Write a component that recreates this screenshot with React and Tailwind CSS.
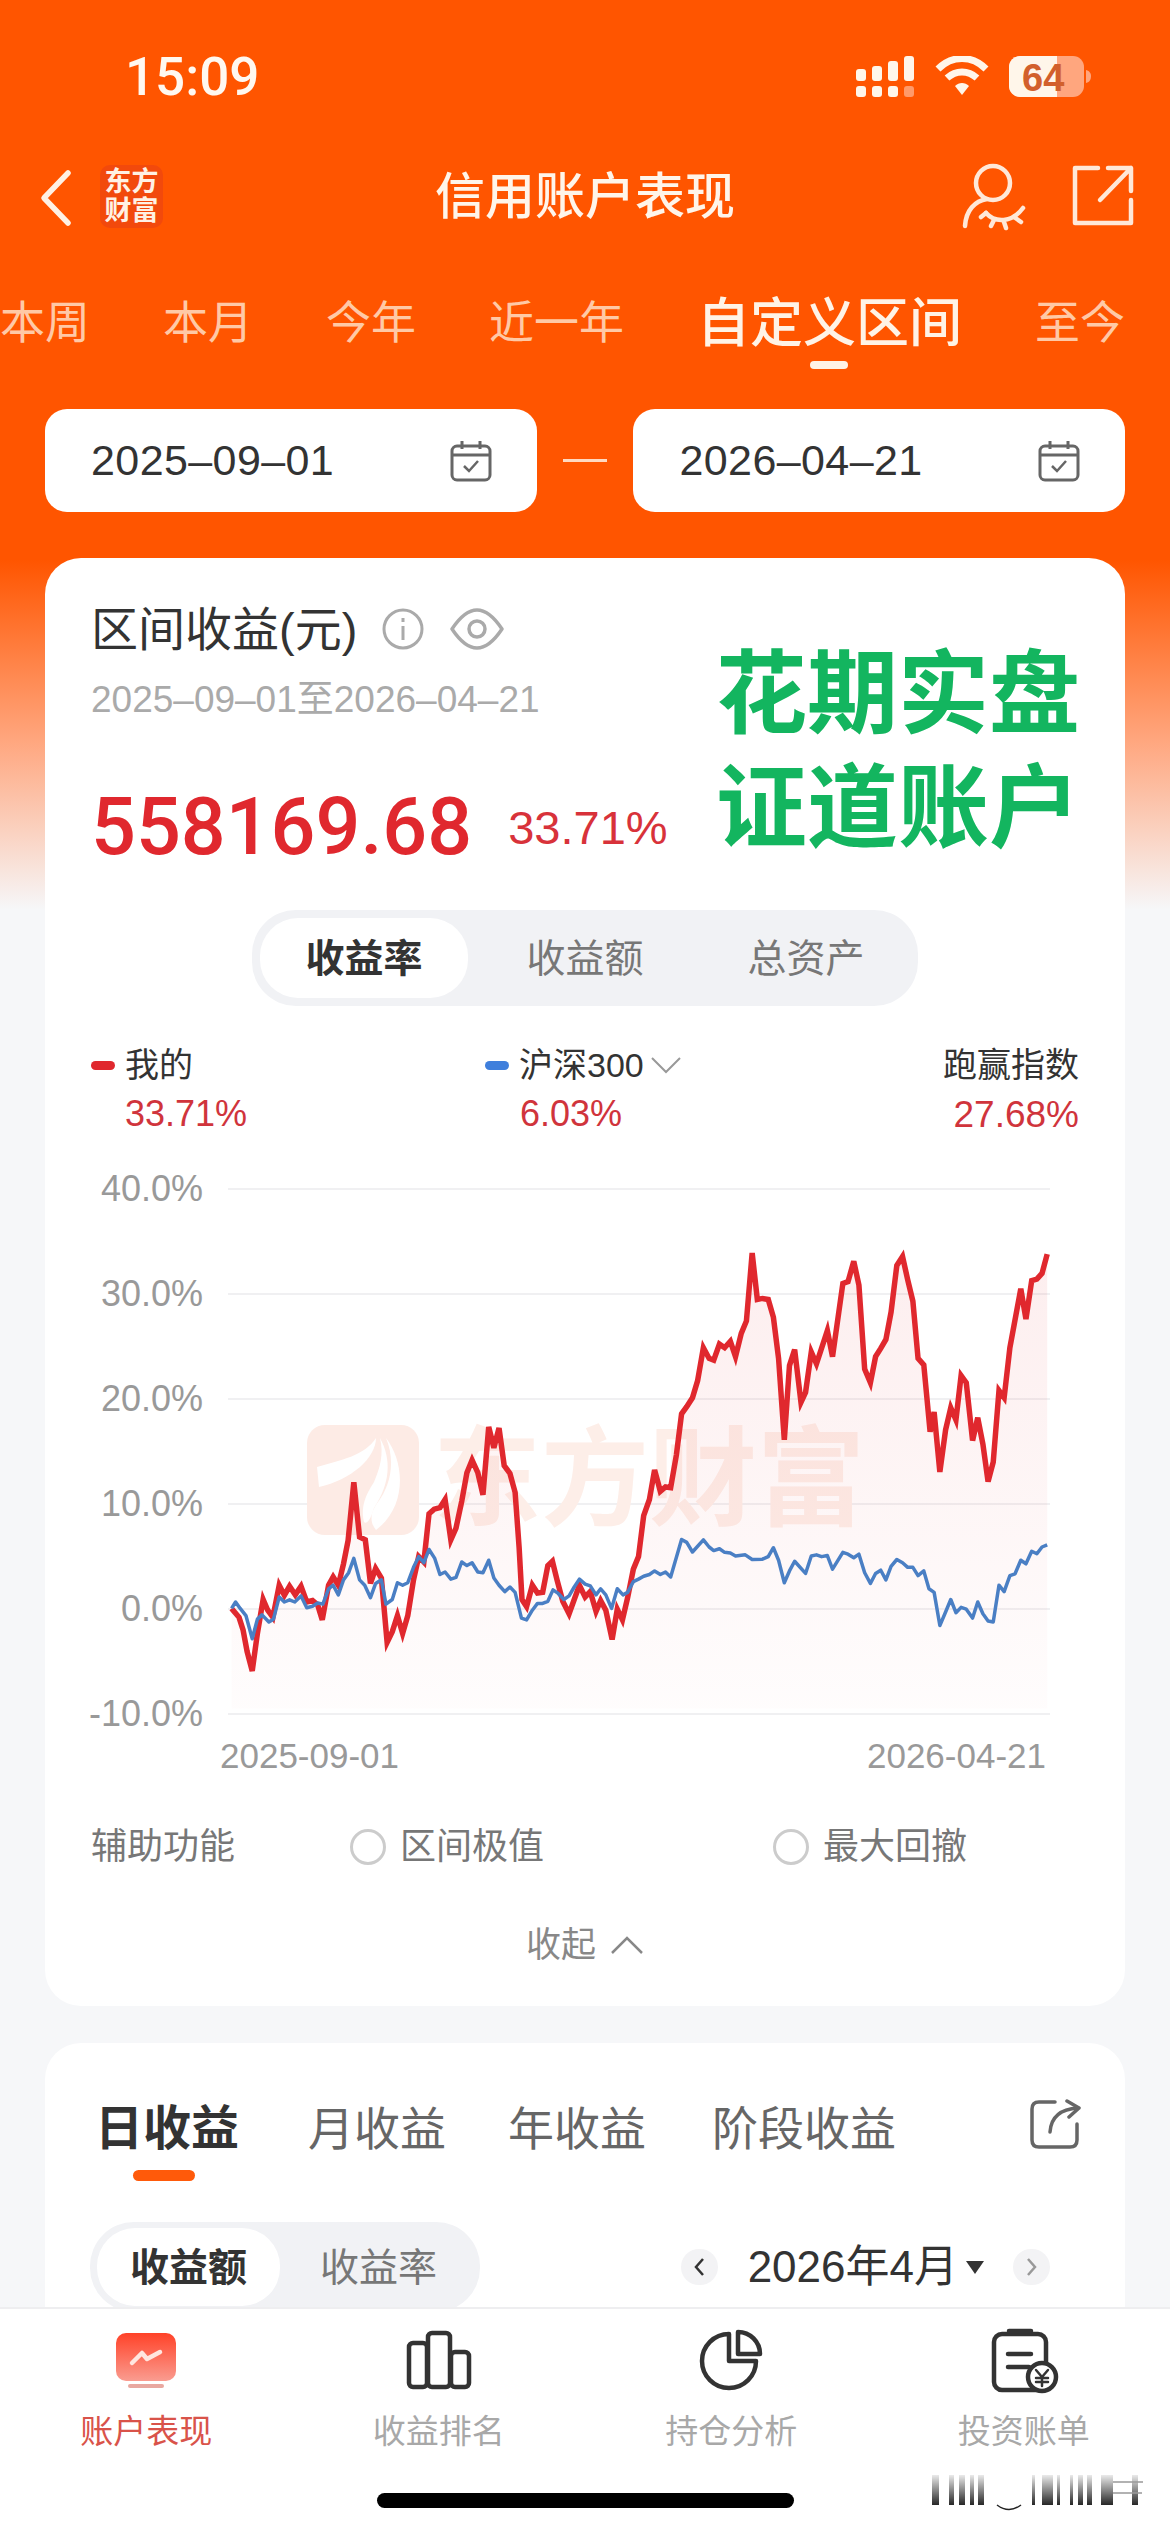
const redLine = '55,1250 68,1275 75,1310 82,1370 91,1425 100,1320 110,1225 118,1255 127,1275 138,1185 147,1213 156,1188 166,1212 176,1188 186,1232 196,1228 205,1240 213,1282 224,1185 232,1162 241,1185 250,1125 258,1060 268,897 278,1050 288,1058 297,1180 306,1138 316,1165 326,1345 335,1315 344,1270 353,1320 362,1270 372,1170 381,1105 390,1120 399,985 408,972 418,968 427,945 437,1058 446,1025 456,950 465,870 474,835 484,870 493,932 503,742 512,800 521,745 530,850 540,872 549,925 556,1080 561,1225 569,1245 579,1185 588,1207 597,1205 606,1130 614,1118 622,1170 632,1230 643,1265 652,1225 661,1185 671,1218 680,1203 690,1258 698,1228 707,1255 718,1337 727,1252 736,1282 745,1220 755,1140 764,1105 773,990 783,945 792,862 802,922 811,910 820,912 830,820 839,705 848,685 858,660 867,612 877,520 887,550 895,555 905,510 914,520 924,502 933,545 943,480 952,445 962,255 971,385 980,382 990,385 999,435 1008,550 1018,778 1027,570 1036,525 1047,673 1055,645 1065,532 1074,565 1093,472 1102,545 1120,340 1129,335 1139,278 1148,345 1158,580 1168,618 1177,545 1186,522 1195,497 1204,420 1214,290 1224,265 1233,330 1242,390 1251,550 1261,568 1272,755 1279,700 1289,868 1299,750 1308,688 1317,722 1326,598 1335,618 1346,780 1355,716 1364,790 1373,895 1382,840 1392,640 1401,660 1411,520 1430,355 1439,440 1449,332 1458,328 1467,312 1476,258';
const blueLine = '55,1250 62,1232 70,1250 80,1270 91,1335 100,1280 108,1268 120,1288 128,1280 138,1218 147,1232 156,1226 165,1232 176,1215 186,1248 196,1244 205,1235 214,1238 224,1195 232,1185 241,1212 250,1170 259,1150 268,1110 278,1170 287,1185 297,1220 306,1180 316,1170 324,1238 335,1225 344,1178 353,1185 362,1178 372,1135 381,1105 390,1122 399,1085 409,1110 418,1155 427,1148 437,1168 446,1163 456,1120 465,1130 474,1122 484,1148 493,1150 503,1115 512,1165 521,1185 531,1203 540,1190 549,1205 560,1277 569,1282 579,1255 588,1236 597,1236 606,1230 615,1198 624,1208 634,1225 643,1215 652,1190 661,1168 671,1182 680,1187 690,1212 698,1195 707,1212 717,1250 727,1195 737,1212 745,1205 755,1175 764,1168 773,1160 783,1155 792,1145 802,1155 811,1148 820,1162 839,1057 848,1065 858,1092 877,1058 887,1078 895,1088 905,1083 914,1093 924,1095 933,1103 950,1100 962,1113 980,1112 990,1105 999,1080 1008,1115 1018,1178 1027,1145 1036,1118 1055,1152 1065,1103 1074,1100 1083,1105 1093,1102 1102,1140 1120,1093 1129,1098 1139,1108 1148,1098 1158,1150 1168,1180 1177,1152 1186,1143 1195,1170 1204,1132 1214,1113 1224,1122 1233,1135 1242,1135 1251,1158 1261,1145 1270,1195 1279,1205 1289,1298 1299,1260 1308,1225 1317,1262 1326,1247 1335,1252 1346,1277 1355,1232 1364,1265 1373,1285 1382,1288 1392,1185 1401,1203 1411,1158 1420,1153 1430,1115 1439,1125 1449,1090 1458,1097 1467,1078 1476,1072';

const yLabels = ['40.0%', '30.0%', '20.0%', '10.0%', '0.0%', '-10.0%'];
const periods = ['本周', '本月', '今年', '近一年', '自定义区间', '至今'];

function Calendar() {
    return (
        <svg width="42" height="42" viewBox="0 0 42 42" fill="none" stroke="#666" strokeWidth="3">
            <rect x="2" y="6" width="38" height="34" rx="5" />
            <path d="M2 15H40" />
            <path d="M12 1V9M30 1V9" />
            <path d="M14 26L19 31L28 21" strokeWidth="2.5" />
        </svg>
    );
}

function DateBox({ value }) {
    return (
        <div className="flex h-[103px] w-[492px] items-center justify-between rounded-[22px] bg-white pl-[46px] pr-[45px]">
            <span className="text-[43px] leading-none tracking-[0.4px] text-[#333]">{value}</span>
            <Calendar />
        </div>
    );
}

function StatusBar() {
    return (
        <div className="flex h-[155px] items-start justify-between pl-[125px] pr-[79px] pt-[51px]">
            <span className="font-['Roboto'] text-[53px] font-medium leading-[52px] text-[#fff8f0]">15:09</span>
            <svg className="mt-[5px]" width="235" height="44" viewBox="856 57 235 44" fill="#fff6ea">
                <rect x="856" y="70" width="10" height="12" rx="3" />
                <rect x="872" y="67" width="10" height="15" rx="3" />
                <rect x="888" y="62" width="10" height="20" rx="3" />
                <rect x="904" y="57" width="10" height="25" rx="3" />
                <rect x="856" y="87" width="10" height="11" rx="3" />
                <rect x="872" y="87" width="10" height="11" rx="3" />
                <rect x="888" y="87" width="10" height="11" rx="3" />
                <rect x="904" y="87" width="10" height="11" rx="3" fill="#ff9a6a" />
                <path d="M938 70C952 56 972 56 986 70" fill="none" stroke="#fff6ea" strokeWidth="7" />
                <path d="M947 79C956 71 968 71 977 79" fill="none" stroke="#fff6ea" strokeWidth="7" />
                <path d="M955 87C959 83 965 83 969 87L962 96Z" />
                <rect x="1009" y="57" width="75" height="41" rx="11" fill="#ffa67e" />
                <path d="M1020 57H1057V98H1020A11 11 0 0 1 1009 87V68A11 11 0 0 1 1020 57Z" />
                <path d="M1086 71C1090 72 1091 75 1091 77C1091 80 1090 83 1086 84Z" fill="#ffa67e" />
            </svg>
            <span className="absolute left-[1022px] top-[59px] font-['Liberation_Sans'] text-[38px] font-bold leading-[38px] text-[#d2602c]">64</span>
        </div>
    );
}

function NavBar() {
    return (
        <div className="relative flex h-[84px] items-center justify-center">
            <svg className="absolute left-[38px] top-[14px]" width="38" height="58" viewBox="0 0 38 58" fill="none" stroke="#fff1e4" strokeWidth="5.5" strokeLinecap="round" strokeLinejoin="round">
                <path d="M30 4L6 29L30 54" />
            </svg>
            <div className="absolute left-[100px] top-[10px] flex h-[63px] w-[63px] flex-col items-center justify-center rounded-[10px] bg-[#f2490c] font-bold text-[#fff1e4]">
                <span className="text-[27px] leading-[29px]">东方</span>
                <span className="text-[27px] leading-[29px]">财富</span>
            </div>
            <span className="text-[50px] font-medium leading-none text-[#fff5ea]">信用账户表现</span>
            <svg className="absolute left-[955px] top-[8px]" width="185" height="68" viewBox="955 165 185 68" fill="none" stroke="#ffe8d8" strokeWidth="4.5" strokeLinecap="round" strokeLinejoin="round">
                <circle cx="993" cy="185" r="17" />
                <path d="M965 228C966 212 975 203 987 201" />
                <path d="M986 215C995 225 1012 225 1023 210" />
                <path d="M986 215L981 219M994 222L991 228M1004 224L1006 230M1014 219L1021 224" />
                <path d="M1098 170H1075V225H1131V202" />
                <path d="M1100 202L1131 170M1108 170H1131V193" />
            </svg>
        </div>
    );
}

function PeriodTabs() {
    return (
        <div className="mt-[54px] flex h-[60px] items-center gap-[73px] whitespace-nowrap">
            {periods.map((p) =>
                p === '自定义区间' ? (
                    <span key={p} className="relative text-[53px] font-medium leading-none text-[#fff3e6]">
                        {p}
                        <span className="absolute left-[113px] top-[64px] h-[8px] w-[38px] rounded-full bg-[#fff3e6]" />
                    </span>
                ) : (
                    <span key={p} className="text-[45px] leading-none text-[#ffc9a6]">
                        {p}
                    </span>
                )
            )}
        </div>
    );
}

function Watermark() {
    return (
        <>
            <svg className="absolute left-[215px] top-[245px]" width="114" height="112" viewBox="0 0 114 112">
                <rect x="1" y="1" width="112" height="110" rx="18" fill="#fdebe5" />
                <path d="M11 43C35 36 58 32 70 14C70 34 45 56 13 63Z" fill="#fff" />
                <path d="M74 14C86 36 84 60 68 84C64 98 60 100 58 98C54 80 62 68 68 58C74 44 78 30 74 14Z" fill="#fff" />
                <path d="M80 14C100 40 100 84 70 106C62 96 66 86 72 78C84 62 90 38 80 14Z" fill="#fff" />
            </svg>
            <span className="absolute left-[342px] top-[238px] whitespace-nowrap text-[108px] font-bold leading-[126px] text-[#fdeee8]">东方财富</span>
        </>
    );
}

function Chart() {
    const area = `${redLine} 1476,1530 55,1530`;
    return (
        <div className="relative mt-[46px]">
            {yLabels.map((label, i) => (
                <div key={label} className={i === 5 ? 'flex h-[20px] items-start' : 'flex h-[105px] items-start'}>
                    <div className="flex h-[20px] w-[112px] items-center justify-end">
                        <span className="text-[36px] leading-none text-[#999]">{label}</span>
                    </div>
                    <div className="ml-[25px] mt-[9px] h-[2px] w-[822px] bg-[#f0f0f2]" />
                </div>
            ))}
            <Watermark />
            <svg className="absolute left-[109px] top-[-17px]" width="900" height="560" viewBox="0 0 1568 1568" preserveAspectRatio="none" fill="none">
                <defs>
                    <linearGradient id="areaFill" gradientUnits="userSpaceOnUse" x1="0" y1="250" x2="0" y2="1530">
                        <stop offset="0" stopColor="#e0282e" stopOpacity="0.08" />
                        <stop offset="1" stopColor="#e0282e" stopOpacity="0.012" />
                    </linearGradient>
                </defs>
                <polygon points={area} fill="url(#areaFill)" />
                <polyline points={redLine} stroke="#e0282e" strokeWidth="5.5" strokeLinejoin="miter" vectorEffect="non-scaling-stroke" />
                <polyline points={blueLine} stroke="#4a7fc4" strokeWidth="3.5" strokeLinejoin="round" vectorEffect="non-scaling-stroke" />
            </svg>
        </div>
    );
}

function SummaryCard() {
    return (
        <div className="relative mx-[45px] mt-[46px] rounded-[36px] bg-white px-[46px] pb-[44px] pt-[48px]">
            <div className="flex h-[46px] items-center">
                <span className="text-[47px] leading-none text-[#333]">区间收益(元)</span>
                <svg className="ml-[25px]" width="42" height="42" viewBox="0 0 42 42" fill="none" stroke="#aaa" strokeWidth="3">
                    <circle cx="21" cy="21" r="19" />
                    <path d="M21 18V32M21 10V14" />
                </svg>
                <svg className="ml-[26px]" width="54" height="42" viewBox="0 0 54 42" fill="none" stroke="#aaa" strokeWidth="3.5" strokeLinejoin="round">
                    <path d="M2 21C12 6 20 2 27 2C34 2 42 6 52 21C42 36 34 40 27 40C20 40 12 36 2 21Z" />
                    <circle cx="27" cy="21" r="8" />
                </svg>
            </div>
            <div className="mt-[29px] text-[37px] leading-none text-[#aaa]">2025–09–01至2026–04–21</div>
            <div className="mt-[69px] flex h-[80px] items-center">
                <span className="font-['Roboto'] text-[79px] font-medium leading-none text-[#e0282e]">558169.68</span>
                <span className="ml-[36px] text-[47px] leading-none text-[#d8323a]">33.71%</span>
            </div>
            <div className="absolute left-[671px] top-[91px] flex flex-col gap-[23px] whitespace-nowrap text-[91px] font-bold leading-[91px] text-[#13b55f]">
                <span>花期实盘</span>
                <span>证道账户</span>
            </div>

            <div className="mt-[43px] flex justify-center">
                <div className="flex h-[96px] w-[666px] items-center rounded-[44px] bg-[#f1f2f5] px-[8px] text-[39px] leading-none text-[#777]">
                    <span className="flex h-[80px] w-[208px] items-center justify-center rounded-[38px] bg-white font-bold text-[#333]">收益率</span>
                    <span className="w-[234px] text-center">收益额</span>
                    <span className="w-[208px] text-center">总资产</span>
                </div>
            </div>

            <div className="relative mt-[42px] flex justify-between">
                <div>
                    <div className="flex h-[34px] items-center text-[34px] leading-none text-[#333]">
                        <span className="mr-[10px] h-[9px] w-[24px] rounded-full bg-[#e0282e]" />
                        我的
                    </div>
                    <div className="mt-[14px] pl-[34px] text-[36px] leading-none text-[#d0343c]">33.71%</div>
                </div>
                <div className="absolute left-[394px] top-0">
                    <div className="flex h-[34px] items-center text-[34px] leading-none text-[#333]">
                        <span className="mr-[10px] h-[9px] w-[24px] rounded-full bg-[#3f7fdc]" />
                        沪深300
                        <svg className="ml-[7px]" width="30" height="18" viewBox="0 0 30 18" fill="none" stroke="#999" strokeWidth="2">
                            <path d="M1 2L15 16L29 2" />
                        </svg>
                    </div>
                    <div className="mt-[14px] pl-[35px] text-[36px] leading-none text-[#d0343c]">6.03%</div>
                </div>
                <div className="text-right">
                    <div className="flex h-[34px] items-center text-[34px] leading-none text-[#333]">跑赢指数</div>
                    <div className="mt-[14px] text-[37px] leading-none text-[#d0343c]">27.68%</div>
                </div>
            </div>

            <Chart />

            <div className="mt-[14px] flex h-[34px] items-center justify-between pl-[129px] pr-[33px] text-[35px] leading-none text-[#999]">
                <span>2025-09-01</span>
                <span>2026-04-21</span>
            </div>

            <div className="mt-[57px] flex h-[36px] items-center text-[36px] leading-none text-[#777]">
                <span className="w-[259px]">辅助功能</span>
                <span className="h-[36px] w-[36px] rounded-full border-[3px] border-[#ccc]" />
                <span className="ml-[14px] w-[373px]">区间极值</span>
                <span className="h-[36px] w-[36px] rounded-full border-[3px] border-[#ccc]" />
                <span className="ml-[14px]">最大回撤</span>
            </div>

            <div className="mt-[62px] flex h-[35px] items-center justify-center text-[35px] leading-none text-[#888]">
                收起
                <svg className="ml-[14px]" width="34" height="20" viewBox="0 0 34 20" fill="none" stroke="#888" strokeWidth="2.5">
                    <path d="M2 18L17 3L32 18" />
                </svg>
            </div>
        </div>
    );
}

function DailyCard() {
    return (
        <div className="mx-[45px] mt-[37px] rounded-t-[36px] bg-white px-[45px] pt-[62px]">
            <div className="relative flex h-[47px] items-center whitespace-nowrap text-[46px] leading-none text-[#666]">
                <span className="relative ml-[5px] text-[48px] font-bold text-[#333]">
                    日收益
                    <span className="absolute left-[38px] top-[65px] h-[11px] w-[62px] rounded-full bg-[#ff5a0a]" />
                </span>
                <span className="ml-[69px]">月收益</span>
                <span className="ml-[62px]">年收益</span>
                <span className="ml-[66px]">阶段收益</span>
                <svg className="absolute left-[940px] top-[-6px]" width="52" height="52" viewBox="1031 2102 52 52" fill="none" stroke="#666" strokeWidth="3.5" strokeLinecap="round" strokeLinejoin="round">
                    <path d="M1056 2105H1040Q1033 2105 1033 2112V2143Q1033 2150 1040 2150H1071Q1078 2150 1078 2143V2127" />
                    <path d="M1051 2135C1052 2120 1062 2112 1079 2111" />
                    <path d="M1068 2104L1080 2111L1070 2120" />
                </svg>
            </div>
            <div className="mt-[70px] flex items-center">
                <div className="flex h-[90px] w-[390px] items-center rounded-[44px] bg-[#f1f2f5] pl-[7px] text-[39px] leading-none text-[#777]">
                    <span className="flex h-[78px] w-[183px] items-center justify-center rounded-[38px] bg-white font-bold text-[#333]">收益额</span>
                    <span className="w-[197px] text-center">收益率</span>
                </div>
                <div className="ml-auto mr-[30px] flex items-center">
                    <span className="flex h-[36px] w-[37px] items-center justify-center rounded-full bg-[#f3f3f5]">
                        <svg width="12" height="20" viewBox="0 0 12 20" fill="none" stroke="#333" strokeWidth="2.5">
                            <path d="M10 2L3 10L10 18" />
                        </svg>
                    </span>
                    <span className="ml-[30px] whitespace-nowrap text-[44px] leading-none text-[#333]">2026年4月</span>
                    <svg className="ml-[8px]" width="18" height="14" viewBox="0 0 18 14" fill="#333">
                        <path d="M0 1H18L9 14Z" />
                    </svg>
                    <span className="ml-[29px] flex h-[36px] w-[37px] items-center justify-center rounded-full bg-[#f3f3f5]">
                        <svg width="12" height="20" viewBox="0 0 12 20" fill="none" stroke="#999" strokeWidth="2.5">
                            <path d="M2 2L9 10L2 18" />
                        </svg>
                    </span>
                </div>
            </div>
        </div>
    );
}

function NavIcon({ viewBox, children }) {
    return (
        <svg width="80" height="70" viewBox={viewBox} fill="none" stroke="#333" strokeWidth="4.5" strokeLinejoin="round" strokeLinecap="round">
            {children}
        </svg>
    );
}

function BottomNav() {
    return (
        <div className="relative h-[225px] border-t-2 border-[#eeeef0] bg-white pt-[19px]">
            <div className="grid grid-cols-4">
                <div className="flex flex-col items-center">
                    <NavIcon viewBox="106 2328 80 70">
                        <defs>
                            <linearGradient id="tabRed" x1="0" y1="0" x2="0" y2="1">
                                <stop offset="0" stopColor="#ff4228" />
                                <stop offset="1" stopColor="#fa9c90" />
                            </linearGradient>
                        </defs>
                        <rect x="116" y="2333" width="60" height="48" rx="10" fill="url(#tabRed)" stroke="none" />
                        <rect x="128" y="2384" width="36" height="4" rx="2" fill="#e9a8a0" stroke="none" />
                        <path d="M132 2363L142 2353L147 2359L160 2352" stroke="#ffe6df" />
                    </NavIcon>
                    <span className="mt-[17px] text-[33px] leading-[34px] text-[#d9534a]">账户表现</span>
                </div>
                <div className="flex flex-col items-center">
                    <NavIcon viewBox="399 2328 80 70">
                        <rect x="409" y="2343" width="18" height="44" rx="4" />
                        <rect x="428" y="2333" width="22" height="54" rx="4" />
                        <rect x="451" y="2352" width="18" height="35" rx="4" />
                    </NavIcon>
                    <span className="mt-[17px] text-[33px] leading-[34px] text-[#a8a8a8]">收益排名</span>
                </div>
                <div className="flex flex-col items-center">
                    <NavIcon viewBox="691 2328 80 70">
                        <path d="M729 2334A27 27 0 1 0 756 2361H729Z" />
                        <path d="M738 2332A22 22 0 0 1 760 2354H738Z" />
                    </NavIcon>
                    <span className="mt-[17px] text-[33px] leading-[34px] text-[#a8a8a8]">持仓分析</span>
                </div>
                <div className="flex flex-col items-center">
                    <NavIcon viewBox="984 2328 80 70">
                        <rect x="994" y="2334" width="52" height="56" rx="8" />
                        <path d="M1009 2331H1031" />
                        <path d="M1008 2354H1031M1008 2367H1029" />
                        <circle cx="1042" cy="2377" r="14" fill="#fff" />
                        <path d="M1036 2370L1042 2377L1048 2370M1042 2377V2386M1036 2378H1048M1036 2382H1048" strokeWidth="2.5" />
                    </NavIcon>
                    <span className="mt-[17px] text-[33px] leading-[34px] text-[#a8a8a8]">投资账单</span>
                </div>
            </div>
            <div className="mx-auto mt-[44px] h-[15px] w-[417px] rounded-full bg-black" />
            <svg className="absolute left-[930px] top-[165px]" width="225" height="45" viewBox="930 2472 225 45">
                <defs>
                    <linearGradient id="smear" x1="0" y1="0" x2="0" y2="1">
                        <stop offset="0" stopColor="#000" stopOpacity="0.08" />
                        <stop offset="1" stopColor="#000" stopOpacity="0.85" />
                    </linearGradient>
                </defs>
                {[[932, 7], [949, 5], [959, 6], [970, 4], [978, 6], [1032, 3], [1042, 11], [1057, 3], [1070, 3], [1078, 5], [1087, 5], [1101, 12], [1132, 6]].map(([x, w]) => (
                    <rect key={x} x={x} y="2473" width={w} height="30" fill="url(#smear)" />
                ))}
                <path d="M997 2503C1005 2509 1013 2509 1021 2503" fill="none" stroke="#222" strokeWidth="1.5" />
                <path d="M1113 2480H1143M1113 2491H1142" stroke="#999" strokeWidth="1.5" />
            </svg>
        </div>
    );
}

export default function App() {
    return (
        <div className="relative flex h-[2532px] w-[1170px] flex-col overflow-hidden bg-white font-['Liberation_Sans','Noto_Sans_CJK_SC',sans-serif]">
            <div className="h-[2307px] overflow-hidden bg-[linear-gradient(180deg,#ff5500_0px,#ff5500_560px,#ffa67e_740px,#f6f7f9_910px,#f6f7f9_100%)]">
                <StatusBar />
                <NavBar />
                <PeriodTabs />
                <div className="mt-[56px] flex items-center px-[45px]">
                    <DateBox value="2025–09–01" />
                    <span className="mx-[26px] h-[3px] w-[45px] bg-[#ffd9c0]" />
                    <DateBox value="2026–04–21" />
                </div>
                <SummaryCard />
                <DailyCard />
            </div>
            <BottomNav />
        </div>
    );
}
